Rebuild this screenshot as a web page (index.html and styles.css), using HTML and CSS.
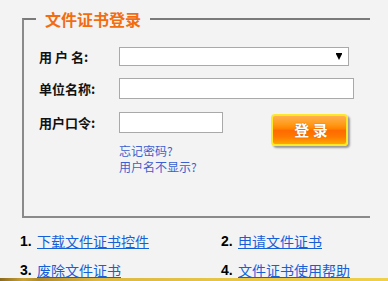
FILE: index.html
```html
<!DOCTYPE html>
<html lang="zh-CN">
<head>
<meta charset="utf-8">
<title>文件证书登录</title>
<link rel="stylesheet" href="styles.css">
</head>
<body>
<div class="page">
  <fieldset class="login">
    <legend class="title">文件证书登录</legend>
    <div class="row">
      <span class="label">用 户 名:</span>
      <div class="select-wrap">
        <select class="select"></select>
        <svg class="arrow" width="6" height="7" viewBox="0 0 6 7"><rect x="0" y="0" width="6" height="1.2" fill="#000"/><polygon points="0,1 6,1 3,7" fill="#000"/></svg>
      </div>
    </div>
    <div class="row row2">
      <span class="label">单位名称:</span>
      <input class="input wide" type="text">
    </div>
    <div class="row row3">
      <span class="label">用户口令:</span>
      <div class="col">
        <input class="input short" type="password">
        <div class="help">
          <a href="#">忘记密码?</a>
          <a href="#">用户名不显示?</a>
        </div>
      </div>
      <button class="btn" type="button">登 录</button>
    </div>
  </fieldset>
  <ol class="links">
    <li><span class="num">1.</span><a href="#">下载文件证书控件</a></li>
    <li><span class="num">2.</span><a href="#">申请文件证书</a></li>
    <li><span class="num">3.</span><a href="#">废除文件证书</a></li>
    <li><span class="num">4.</span><a href="#">文件证书使用帮助</a></li>
  </ol>
  <div class="bar"></div>
</div>
</body>
</html>
```
FILE: styles.css
```css
html, body {
  margin: 0;
  padding: 0;
  height: 281px;
  overflow: hidden;
}
body {
  background: #f3f3f3;
  font-family: "Noto Sans CJK SC", "Noto Sans", sans-serif;
  color: #111;
}
.page {
  display: flex;
  flex-direction: column;
  height: 281px;
}
.login {
  box-sizing: border-box;
  width: 348px;
  margin: 8px 0 0 22px;
  padding: 16px 0 41px 15px;
  border: 2px solid #8a8a8a;
  border-top-color: #7a7a7a;
  border-right: none;
  min-width: 0;
}
.title {
  margin-left: -3px;
  padding: 0 9px;
  font-size: 16px;
  line-height: 22px;
  font-weight: bold;
  color: #f26c10;
}
.row {
  display: flex;
  align-items: center;
}
.label {
  width: 80px;
  font-size: 13px;
  font-weight: bold;
  line-height: 21px;
  color: #111;
  white-space: pre;
}
.select-wrap {
  position: relative;
  width: 230px;
  height: 19px;
}
.select {
  display: block;
  appearance: none;
  -webkit-appearance: none;
  box-sizing: border-box;
  width: 230px;
  height: 19px;
  margin: 0;
  border: 1px solid #a9a9a9;
  border-radius: 0;
  background: #fff;
}
.arrow {
  position: absolute;
  left: 217px;
  top: 6px;
}
.row2 {
  margin-top: 11px;
}
.row3 {
  margin-top: 13px;
  align-items: flex-start;
}
.input {
  box-sizing: border-box;
  height: 21px;
  margin: 0;
  padding: 0 3px;
  border: 1px solid #a9a9a9;
  background: #fff;
  outline: none;
}
.wide {
  width: 235px;
}
.short {
  width: 104px;
}
.col {
  display: flex;
  flex-direction: column;
}
.help {
  display: flex;
  flex-direction: column;
  margin-top: 10px;
}
.help a {
  font-size: 12px;
  line-height: 16px;
  color: #3a5fd0;
  text-decoration: none;
}
.btn {
  box-sizing: border-box;
  width: 77px;
  height: 32px;
  margin: 2px 0 0 48px;
  padding: 0 0 0 3px;
  border: 2px solid #fde92a;
  border-radius: 4px;
  background: linear-gradient(to bottom, #ffb050 0%, #ff9a18 30%, #ff8400 45%, #ff6a00 52%, #ff7a00 75%, #ffa800 100%);
  box-shadow: 2px 2px 2px #9a9a9a;
  color: #fff;
  font-family: "Noto Sans CJK SC", sans-serif;
  font-size: 15px;
  font-weight: bold;
  line-height: 28px;
  text-shadow: 0 0 1px #b04000;
  white-space: pre;
}
.links {
  list-style: none;
  margin: 15px 0 0 20px;
  padding: 0;
  display: grid;
  grid-template-columns: 201px 1fr;
  row-gap: 13px;
}
.links li {
  display: flex;
  align-items: center;
  font-size: 14px;
  line-height: 16px;
}
.num {
  font-family: "Liberation Sans", Arial, sans-serif;
  font-weight: bold;
  font-size: 14px;
  width: 17px;
  color: #000;
}
.links a {
  color: #1560d8;
  text-decoration: underline;
}
.bar {
  margin-top: auto;
  height: 3px;
  background: linear-gradient(to right, #8c6a1c 0%, #c9a236 6%, #b08a2a 10%, #dcb840 25%, #e6c444 55%, #f0d048 100%);
}
```
